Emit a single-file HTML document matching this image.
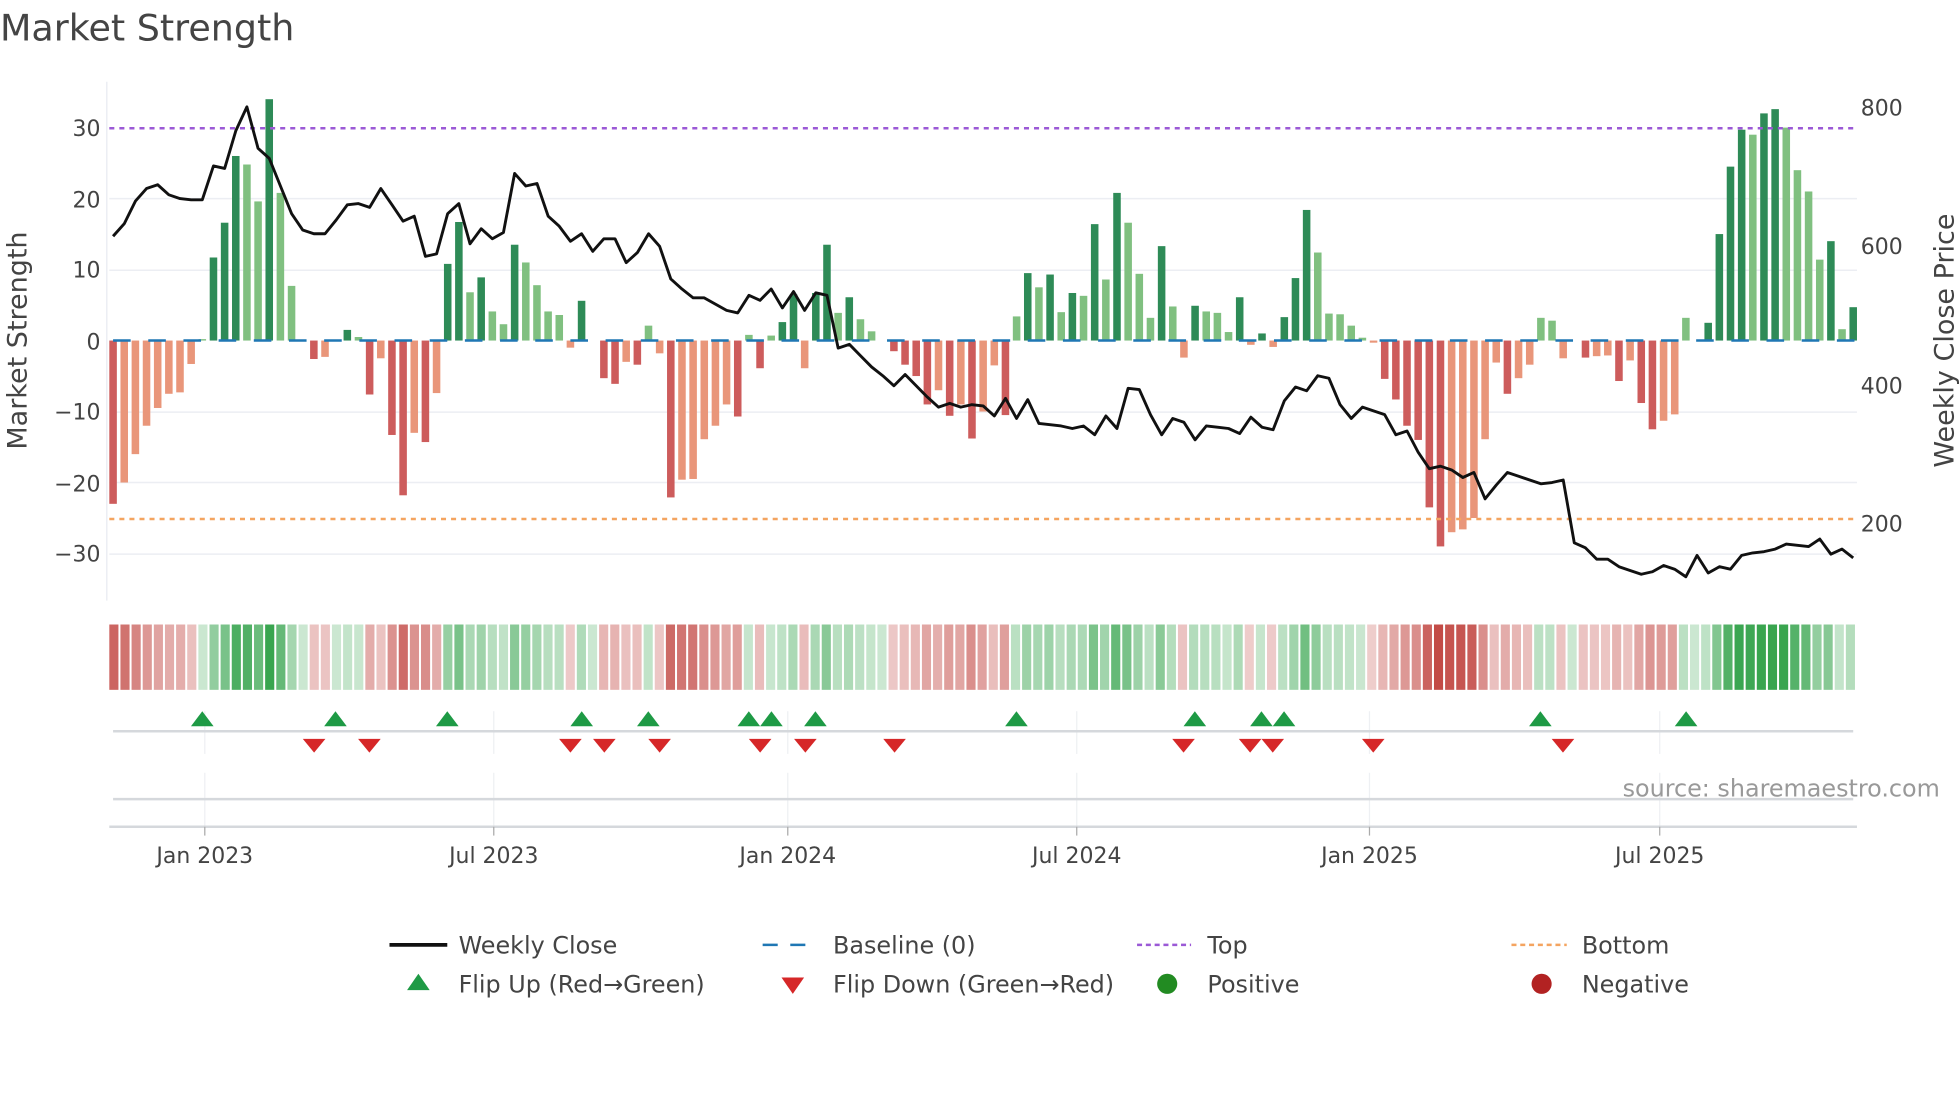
<!DOCTYPE html>
<html><head><meta charset="utf-8">
<style>
html,body{margin:0;padding:0;background:#fff;width:1960px;height:1102px;overflow:hidden}
svg{display:block}
text{font-family:"DejaVu Sans","Liberation Sans",sans-serif;fill:#444}
</style></head>
<body>
<svg id="s" width="1960" height="1102" viewBox="0 0 1560 877" xmlns="http://www.w3.org/2000/svg">
<text x="0" y="32" font-size="29" fill="#333">Market Strength</text>
<g stroke="#eceef3" stroke-width="1.2">
<line x1="87" x2="1478" y1="158" y2="158"/><line x1="87" x2="1478" y1="215" y2="215"/>
<line x1="87" x2="1478" y1="328" y2="328"/><line x1="87" x2="1478" y1="384" y2="384"/>
<line x1="87" x2="1478" y1="441" y2="441"/>
</g>
<line x1="85" x2="85" y1="65" y2="478" stroke="#eceef3" stroke-width="1.2"/>
<g font-size="17.5" text-anchor="end">
<text x="80" y="108">30</text><text x="80" y="165">20</text><text x="80" y="221">10</text>
<text x="80" y="278">0</text><text x="80" y="334">−10</text><text x="80" y="391">−20</text><text x="80" y="447">−30</text>
</g>
<g font-size="17.5">
<text x="1481" y="92">800</text><text x="1481" y="202">600</text><text x="1481" y="313">400</text><text x="1481" y="423">200</text>
</g>
<text transform="translate(21,271) rotate(-90)" font-size="21.5" text-anchor="middle">Market Strength</text>
<text transform="translate(1555,271) rotate(-90)" font-size="21.5" text-anchor="middle">Weekly Close Price</text>
<g id="bars"></g>
<line x1="90" x2="1478" y1="271" y2="271" stroke="#1f77b4" stroke-width="2" stroke-dasharray="14,14"/>
<line x1="87" x2="1478" y1="102" y2="102" stroke="#9b59d6" stroke-width="2" stroke-dasharray="4,4"/>
<line x1="87" x2="1478" y1="413" y2="413" stroke="#f4a460" stroke-width="2" stroke-dasharray="4,4"/>
<polyline id="price" fill="none" stroke="#111" stroke-width="2.3" stroke-linejoin="round"/>
<g id="strip"></g>
<g stroke="#eef0f3" stroke-width="1">
<line x1="163" x2="163" y1="566" y2="600"/><line x1="393" x2="393" y1="566" y2="600"/><line x1="627" x2="627" y1="566" y2="600"/><line x1="857" x2="857" y1="566" y2="600"/><line x1="1090" x2="1090" y1="566" y2="600"/><line x1="1321" x2="1321" y1="566" y2="600"/>
<line x1="163" x2="163" y1="615" y2="658"/><line x1="393" x2="393" y1="615" y2="658"/><line x1="627" x2="627" y1="615" y2="658"/><line x1="857" x2="857" y1="615" y2="658"/><line x1="1090" x2="1090" y1="615" y2="658"/><line x1="1321" x2="1321" y1="615" y2="658"/>
</g>
<line x1="90" x2="1475" y1="582" y2="582" stroke="#d5d8dc" stroke-width="2"/>
<line x1="90" x2="1475" y1="636" y2="636" stroke="#d5d8dc" stroke-width="2"/>
<line x1="87" x2="1478" y1="658" y2="658" stroke="#d5d8dc" stroke-width="2"/>
<g stroke="#aaa" stroke-width="1"><line x1="163" x2="163" y1="658" y2="665"/><line x1="393" x2="393" y1="658" y2="665"/><line x1="627" x2="627" y1="658" y2="665"/><line x1="857" x2="857" y1="658" y2="665"/><line x1="1090" x2="1090" y1="658" y2="665"/><line x1="1321" x2="1321" y1="658" y2="665"/></g>
<g id="flips"></g>
<text x="1544" y="634" font-size="19" style="fill:#999" text-anchor="end">source: sharemaestro.com</text>
<g font-size="17.5" text-anchor="middle">
<text x="163" y="687">Jan 2023</text><text x="393" y="687">Jul 2023</text><text x="627" y="687">Jan 2024</text><text x="857" y="687">Jul 2024</text><text x="1090" y="687">Jan 2025</text><text x="1321" y="687">Jul 2025</text>
</g>
<g font-size="19">
<line x1="310" x2="356" y1="752" y2="752" stroke="#111" stroke-width="3"/><text x="365" y="759">Weekly Close</text>
<line x1="607" x2="650" y1="752" y2="752" stroke="#1f77b4" stroke-width="2" stroke-dasharray="12,10"/><text x="663" y="759">Baseline (0)</text>
<line x1="905" x2="948" y1="752" y2="752" stroke="#9b59d6" stroke-width="2" stroke-dasharray="4,3"/><text x="961" y="759">Top</text>
<line x1="1203" x2="1247" y1="752" y2="752" stroke="#f4a460" stroke-width="2" stroke-dasharray="4,3"/><text x="1259" y="759">Bottom</text>
<polygon points="333,775 324,788 342,788" fill="#1e9a45"/><text x="365" y="790">Flip Up (Red→Green)</text>
<polygon points="622,778 640,778 631,791" fill="#d62728"/><text x="663" y="790">Flip Down (Green→Red)</text>
<circle cx="929" cy="783" r="8" fill="#228b22"/><text x="961" y="790">Positive</text>
<circle cx="1227" cy="783" r="8" fill="#b22222"/><text x="1259" y="790">Negative</text>
</g>
</svg>
<script>
var V=[-23,-20,-16,-12,-9.5,-7.5,-7.3,-3.3,0.2,11.7,16.6,26,24.8,19.6,34,20.8,7.7,0,-2.6,-2.3,0,1.5,0.5,-7.6,-2.5,-13.3,-21.8,-13,-14.3,-7.4,10.8,16.7,6.8,8.9,4.1,2.3,13.5,11,7.8,4.1,3.6,-1,5.6,0,-5.3,-6.1,-3,-3.4,2.1,-1.8,-22.1,-19.6,-19.5,-13.9,-12,-9,-10.7,0.8,-3.9,0.7,2.6,6.5,-3.9,6.7,13.5,3.9,6.1,3,1.3,0,-1.5,-3.4,-5,-9,-7,-10.6,-9,-13.8,-10,-3.5,-10.5,3.4,9.5,7.5,9.3,4,6.7,6.3,16.4,8.6,20.8,16.6,9.4,3.2,13.3,4.8,-2.4,4.9,4.1,3.9,1.2,6.1,-0.6,1,-0.9,3.3,8.8,18.4,12.4,3.8,3.7,2.1,0.4,-0.3,-5.4,-8.3,-12,-14,-23.5,-29,-27,-26.6,-25,-13.9,-3.1,-7.5,-5.3,-3.4,3.2,2.8,-2.5,0,-2.4,-2.2,-2.1,-5.7,-2.8,-8.8,-12.5,-11.3,-10.4,3.2,0,2.5,15,24.5,29.7,29,32,32.6,30,24,21,11.4,14,1.6,4.7];
var P=[188,178,160,150,147,155,158,159,159,132,134,104,85,118,126,148,170,183,186,186,175,163,162,165,150,163,176,172,204,202,170,162,194,182,190,185,138,148,146,172,180,192,186,200,190,190,209,201,186,196,222,230,237,237,242,247,249,235,239,230,245,232,247,233,235,277,274,283,292,299,307,298,307,316,324,321,324,322,323,331,317,333,318,337,338,339,341,339,346,331,341,309,310,330,346,333,336,350,339,340,341,345,332,340,342,319,308,311,299,301,322,333,324,327,330,346,343,360,373,371,374,380,376,397,386,376,379,382,385,384,382,432,436,445,445,451,454,457,455,450,453,459,442,456,451,453,442,440,439,437,433,434,435,429,441,437,444];
var NS="http://www.w3.org/2000/svg",n=V.length,x0=90,dx=(1475-90)/(n-1);
function el(t,a,p){var e=document.createElementNS(NS,t);for(var k in a)e.setAttribute(k,a[k]);p.appendChild(e);}
var B=document.getElementById('bars'),S=document.getElementById('strip');
for(var i=0;i<n;i++){var v=V[i],x=x0+i*dx,prev=i?V[i-1]:v;
 var up=Math.abs(v)>=Math.abs(prev);var c;
 if(v>=0)c=up?'#2e8b57':'#80c080';else c=up?'#cd5c5c':'#e9967a';
 if(Math.abs(v)>0.05){var y=271-v*5.65;el('rect',{x:x-3,y:Math.min(y,271),width:6,height:Math.abs(271-y),fill:c},B);}
 var t=Math.min(Math.abs(v)/30,1),a=0.25+0.7*t,col=v>=0?'rgba(46,160,70,'+a+')':'rgba(190,60,55,'+a+')';
 el('rect',{x:87+i*(1391/n),y:497,width:1391/n-1.6,height:52,fill:col},S);}
var pts=[];for(var i=0;i<P.length;i++)pts.push((x0+i*dx).toFixed(1)+','+P[i]);
document.getElementById('price').setAttribute('points',pts.join(' '));
var F=document.getElementById('flips');
[161,267,356,463,516,596,614,649,809,951,1004,1022,1226,1342].forEach(function(x){el('polygon',{points:x+',566 '+(x-9)+',578 '+(x+9)+',578',fill:'#1e9a45'},F);});
[250,294,454,481,525,605,641,712,942,995,1013,1093,1244].forEach(function(x){el('polygon',{points:(x-9)+',588 '+(x+9)+',588 '+x+',599',fill:'#d62728'},F);});
</script>
</body></html>
